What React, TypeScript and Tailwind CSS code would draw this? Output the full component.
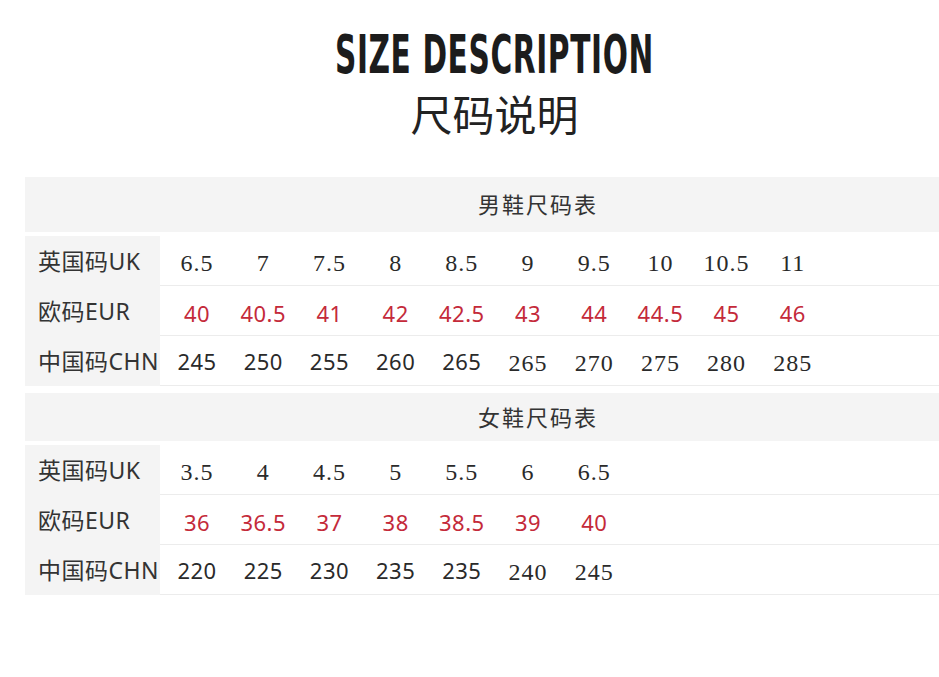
const SANS = "font-['Noto_Sans','Noto_Sans_CJK_SC',sans-serif]";
const SERIF = "font-['Liberation_Serif','Noto_Sans_CJK_SC',serif]";

type Cell = { v: string; serif?: boolean };

interface Table {
  title: string;
  headerClass: string;
  uk: string[];
  eur: string[];
  chn: string[];
}

const tables: Table[] = [
  {
    title: "男鞋尺码表",
    headerClass: "h-[55px]",
    uk: ["6.5", "7", "7.5", "8", "8.5", "9", "9.5", "10", "10.5", "11"],
    eur: ["40", "40.5", "41", "42", "42.5", "43", "44", "44.5", "45", "46"],
    chn: ["245", "250", "255", "260", "265", "265", "270", "275", "280", "285"],
  },
  {
    title: "女鞋尺码表",
    headerClass: "h-[48px] mt-[7px]",
    uk: ["3.5", "4", "4.5", "5", "5.5", "6", "6.5"],
    eur: ["36", "36.5", "37", "38", "38.5", "39", "40"],
    chn: ["220", "225", "230", "235", "235", "240", "245"],
  },
];

function Row({
  label,
  cells,
  red,
}: {
  label: string;
  cells: Cell[];
  red?: boolean;
}) {
  return (
    <div className="flex h-[50px]">
      <div className={`w-[135px] shrink-0 bg-[#f4f4f4] flex items-center pl-[13px] text-[23px] tracking-[0.5px] text-[#333] ${SANS}`}>
        {label}
      </div>
      <div className="flex-1 flex items-center pl-[4px] border-b border-[#ececec]">
        <div className="grid grid-cols-[repeat(10,66.2px)]">
          {cells.map((c, i) => (
            <span
              key={i}
              className={`text-center pt-[5px] ${
                c.serif ? `${SERIF} text-[24px] tracking-[1px]` : `${SANS} text-[22px] tracking-[0.5px]`
              } ${red ? "text-[#c42a3a]" : "text-[#2a2a2a]"}`}
            >
              {c.v}
            </span>
          ))}
        </div>
      </div>
    </div>
  );
}

function SizeTable({ t }: { t: Table }) {
  return (
    <div>
      <div className={`${t.headerClass} bg-[#f4f4f4] flex items-center pl-[453px]`}>
        <span className={`text-[22px] tracking-[2px] text-[#333] ${SANS}`}>{t.title}</span>
      </div>
      <div className="mt-[4px]">
        <Row label="英国码UK" cells={t.uk.map((v) => ({ v, serif: true }))} />
        <Row label="欧码EUR" red cells={t.eur.map((v) => ({ v }))} />
        <Row label="中国码CHN" cells={t.chn.map((v, i) => ({ v, serif: i >= 5 }))} />
      </div>
    </div>
  );
}

export default function App() {
  return (
    <div className="w-[939px] h-[677px] bg-white overflow-hidden">
      <div className="pt-[30px] pl-[50px] flex flex-col items-center">
        <h1 className="font-['DejaVu_Sans_Condensed','DejaVu_Sans',sans-serif] font-bold text-[54px] leading-[50px] text-[#1c1c1c] tracking-[1px] scale-x-[0.61]">
          SIZE DESCRIPTION
        </h1>
        <p className="mt-[8px] text-[42px] leading-[50px] text-[#222] font-['Noto_Sans_CJK_SC',sans-serif] font-normal">
          尺码说明
        </p>
      </div>
      <div className="ml-[25px] mt-[39px]">
        {tables.map((t) => (
          <SizeTable key={t.title} t={t} />
        ))}
      </div>
    </div>
  );
}
